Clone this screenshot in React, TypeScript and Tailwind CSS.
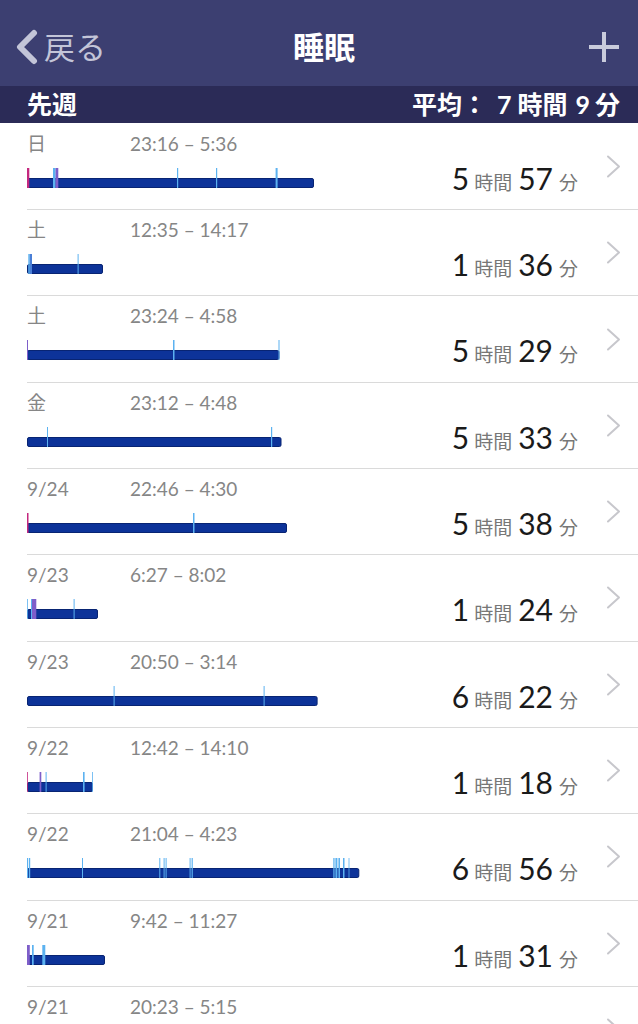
import React from "react";

type Tick = [number, number, string];

const LB = "#5cb2f0";
const PU = "#7e5ec9";
const PK = "#c4287f";

interface SleepRow {
  day: string;
  time: string;
  w: number;
  ticks: Tick[];
  h?: string;
  m?: string;
}

const rows: SleepRow[] = [
  {
    day: "日",
    time: "23:16 – 5:36",
    w: 287,
    ticks: [
      [0, 2.3, PK],
      [26, 2.6, LB],
      [28.6, 2.7, PU],
      [150, 1.2, LB],
      [189, 1.2, LB],
      [248.6, 2, LB],
    ],
    h: "5",
    m: "57",
  },
  {
    day: "土",
    time: "12:35 – 14:17",
    w: 76,
    ticks: [
      [1.3, 1.5, LB],
      [2.8, 2.2, "#4a7fd6"],
      [50.6, 1, LB],
    ],
    h: "1",
    m: "36",
  },
  {
    day: "土",
    time: "23:24 – 4:58",
    w: 252.5,
    ticks: [
      [0, 1, PU],
      [146, 1.5, LB],
      [251.5, 1, LB],
    ],
    h: "5",
    m: "29",
  },
  {
    day: "金",
    time: "23:12 – 4:48",
    w: 254.5,
    ticks: [
      [20, 1, LB],
      [244, 1.2, LB],
    ],
    h: "5",
    m: "33",
  },
  {
    day: "9/24",
    time: "22:46 – 4:30",
    w: 260,
    ticks: [
      [0, 1.5, PK],
      [166, 1.5, LB],
    ],
    h: "5",
    m: "38",
  },
  {
    day: "9/23",
    time: "6:27 – 8:02",
    w: 71,
    ticks: [
      [0, 0.8, LB],
      [4, 1, LB],
      [5, 4.3, PU],
      [46.6, 1, LB],
    ],
    h: "1",
    m: "24",
  },
  {
    day: "9/23",
    time: "20:50 – 3:14",
    w: 290.6,
    ticks: [
      [86.6, 1, LB],
      [236.6, 1, LB],
    ],
    h: "6",
    m: "22",
  },
  {
    day: "9/22",
    time: "12:42 – 14:10",
    w: 66,
    ticks: [
      [0, 0.8, PK],
      [12.6, 1.7, PU],
      [18.6, 1, LB],
      [56, 1.6, LB],
      [65.2, 0.8, LB],
    ],
    h: "1",
    m: "18",
  },
  {
    day: "9/22",
    time: "21:04 – 4:23",
    w: 332.3,
    ticks: [
      [0, 1.2, LB],
      [2, 1.2, LB],
      [55, 1, LB],
      [132.3, 1, LB],
      [136.6, 1, LB],
      [138.6, 1, LB],
      [162.6, 1, LB],
      [164.6, 1.2, LB],
      [306.3, 1, LB],
      [307.6, 1, LB],
      [309, 1, LB],
      [310.6, 1, LB],
      [312, 1, LB],
      [316, 1.5, LB],
      [321.6, 0.8, LB],
    ],
    h: "6",
    m: "56",
  },
  {
    day: "9/21",
    time: "9:42 – 11:27",
    w: 78,
    ticks: [
      [0, 2.8, PU],
      [5, 1.7, LB],
      [15.3, 3, LB],
    ],
    h: "1",
    m: "31",
  },
  // last row is cut by the bottom of the screen, only its top line shows
  {
    day: "9/21",
    time: "20:23 – 5:15",
    w: 403,
    ticks: [
      [0, 1.5, PK],
      [120, 1, LB],
      [280, 1.2, LB],
    ],
  },
];

function SleepBar({ w, ticks }: { w: number; ticks: Tick[] }) {
  return (
    <svg width={w + 1} height={20} className="block mt-[13px]">
      <rect x={0.5} y={10.5} width={w - 1} height={9} rx={1.5} fill="#0d3399" stroke="#082473" strokeWidth={1} />
      {ticks.map(([x, tw, c], i) => (
        <rect key={i} x={x} y={0} width={tw} height={20} fill={c} />
      ))}
    </svg>
  );
}

function RowChevron() {
  return (
    <svg width={15} height={23} viewBox="0 0 15 23" fill="none">
      <polyline points="2,1.5 13,11.5 2,21.5" stroke="#c7c7cc" strokeWidth={2} strokeLinecap="round" strokeLinejoin="round" />
    </svg>
  );
}

export default function App() {
  return (
    <div
      className="w-[638px] bg-white"
      style={{ fontFamily: 'Lato, "Noto Sans CJK JP", sans-serif' }}
    >
      {/* nav bar */}
      <div className="h-[86px] bg-[#3c3f71] flex items-center pt-[8px]">
        <div className="w-[140px] pl-[14px] flex items-center text-[#c3c5d8]">
          <svg width={26} height={36} viewBox="0 0 26 36" fill="none">
            <polyline points="20,4 6,18 20,32" stroke="#c3c5d8" strokeWidth={6} strokeLinecap="round" strokeLinejoin="round" />
          </svg>
          <span className="ml-[4px] text-[31px] leading-[36px]">戻る</span>
        </div>
        <div className="flex-1 text-center pl-[10px] text-white font-bold text-[31px] leading-[36px]">
          睡眠
        </div>
        <div className="w-[140px] flex justify-end pr-[17px]">
          <svg width={34} height={34} viewBox="0 0 34 34" fill="none">
            <path d="M17 2V32M2 17H32" stroke="#c9cbdb" strokeWidth={4} />
          </svg>
        </div>
      </div>
      {/* week header */}
      <div className="h-[36.7px] bg-[#2b2b57] flex items-center justify-between pl-[27px] pr-[18px] text-white font-bold text-[25px] leading-none">
        <span>先週</span>
        <span className="flex items-baseline">
          <span>平均：</span>
          <span className="ml-[10px]">7</span>
          <span className="ml-[6px]">時間</span>
          <span className="ml-[8px]">9</span>
          <span className="ml-[5px]">分</span>
        </span>
      </div>
      {/* list */}
      {rows.map((r, i) => (
        <div key={i} className="h-[86.33px] pl-[27px]">
          <div
            className={`flex h-full border-t ${i === 0 ? "border-transparent" : "border-[#dadada]"}`}
          >
            <div className="flex-1 pt-[9px]">
              <div className="flex text-[19px] leading-[22px] text-[#868686]">
                <span className="w-[103px]">{r.day}</span>
                <span>{r.time}</span>
              </div>
              <SleepBar w={r.w} ticks={r.ticks} />
            </div>
            {r.h && (
              <div className="flex items-baseline self-start pt-[39px] text-[30px] leading-[30px] text-[#1a1a1a]">
                <span>{r.h}</span>
                <span className="ml-[5px] text-[19px] text-[#777777]">時間</span>
                <span className="ml-[6px]">{r.m}</span>
                <span className="ml-[6px] text-[19px] text-[#777777]">分</span>
              </div>
            )}
            <div className="flex items-center pl-[28px] pr-[17px]">
              <RowChevron />
            </div>
          </div>
        </div>
      ))}
    </div>
  );
}
